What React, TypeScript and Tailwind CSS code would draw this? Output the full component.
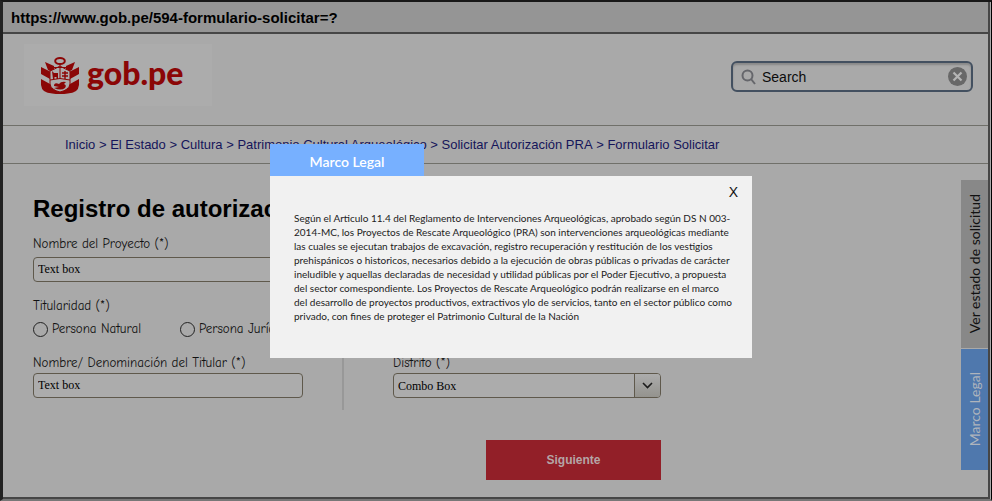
import React from "react";

const crumbs = [
  "Inicio",
  "El Estado",
  "Cultura",
  "Patrimonio Cultural Arqueológico",
  "Solicitar Autorización PRA",
  "Formulario Solicitar",
];

const legalLines = [
  "Según el Articulo 11.4 del Reglamento de Intervenciones Arqueológicas, aprobado según DS N 003-",
  "2014-MC, los Proyectos de Rescate Arqueológico (PRA) son intervenciones arqueológicas mediante",
  "las cuales se ejecutan trabajos de excavación, registro recuperación y restitución de los vestigios",
  "prehispánicos o historicos, necesarios debido a la ejecución de obras públicas o privadas de carácter",
  "ineludible y aquellas declaradas de necesidad y utilidad públicas por el Poder Ejecutivo, a propuesta",
  "del sector comespondiente. Los Proyectos de Rescate Arqueológico podrán realizarse en el marco",
  "del desarrollo de proyectos productivos, extractivos ylo de servicios, tanto en el sector público como",
  "privado, con fines de proteger el Patrimonio Cultural de la Nación",
];

const labelFont = "font-['Comic_Sans_MS','Comic_Neue',Lato,sans-serif] text-[13px] leading-4 text-[#111]";
const fieldFont = "font-['Liberation_Serif',serif] text-xs text-black";

function Shield() {
  return (
    <svg width="38" height="37" viewBox="0 0 38 37" aria-hidden="true">
      <g fill="#8b0606">
        <path d="M4 5 L13 9 V16 L7 13 Z" />
        <path d="M34 5 L25 9 V16 L31 13 Z" />
        <path d="M0 10 L10 15 V36 Q1 36 0 28 Z" />
        <path d="M38 10 L28 15 V36 Q37 36 38 28 Z" />
        <path d="M6 31 H32 V35 Q28 37 19 37 Q10 37 6 35 Z" />
      </g>
      <path d="M0 17 L9 22 V27 L0 22 Z M38 17 L29 22 V27 L38 22 Z" fill="#acacac" />
      <g fill="none" stroke="#8b0606">
        <ellipse cx="19" cy="4" rx="4.8" ry="3" strokeWidth="2" />
        <path d="M9 14 Q14 12 19 9 Q24 12 29 14 V27 Q28 33 19 35 Q10 33 9 27 Z" fill="#acacac" strokeWidth="1" />
        <path d="M12 10.500 H26 M19 7 V22 M9 23 Q19 20 29 23" strokeWidth="1" />
        <path d="M24 22 V14 M21 16 H27 M21 19 H27" strokeWidth="1.4" />
      </g>
      <path d="M11 14 L13 16 H17 V22 H15.500 V20 H13.500 V22 H12 Z" fill="#8b0606" />
      <path d="M13 29 Q13 25 18 27 Q20 24 25 25 L23 27 Q26 28 24 31 Q20 34 13 31 L18 30 Z" fill="#8b0606" />
    </svg>
  );
}

export default function App() {
  return (
    <div className="relative flex min-h-screen flex-col border-y-2 border-l-[3px] border-r border-black border-l-[#222] border-t-[#181818] border-b-[#777] bg-[#a9a9a9] font-['Liberation_Sans',Arial,sans-serif] text-black">
      <div className="mr-px flex flex-1 flex-col border-b-2 border-r-2 border-[#464646]">
        <div className="flex h-8 items-center border-b-2 border-[#464646] bg-[#959595] px-2 pt-[2px] text-[15px] font-bold">
          https://www.gob.pe/594-formulario-solicitar=?
        </div>

        <header className="flex h-[91px] items-start justify-between pl-[21px] pr-[15px] pt-[10px]">
          <div className="flex h-[62px] w-[188px] items-center gap-2 bg-[#acacac] pl-[17px]">
            <Shield />
            <span className="pb-1 font-[Lato,sans-serif] text-[32px] font-black leading-8 text-[#8b0606]">gob.pe</span>
          </div>
          <label className="mt-[17px] flex h-[31px] w-[242px] items-center gap-[6px] rounded-md border-2 border-[#435060] bg-[#a9a9a9] px-2 shadow-[inset_0_2px_2px_#888]">
            <svg width="15" height="16" viewBox="0 0 15 16" fill="none" stroke="#65666b" strokeWidth="2" aria-hidden="true">
              <circle cx="6.5" cy="6.5" r="5" />
              <path d="M10 10 L14 15" />
            </svg>
            <input aria-label="Search" defaultValue="Search" className="min-w-0 flex-1 bg-transparent text-sm text-[#0c0c0c] outline-none" />
            <button type="button" aria-label="Borrar" className="-mr-1">
              <svg width="19" height="19" viewBox="0 0 19 19" className="block">
                <circle cx="9.5" cy="9.5" r="9.5" fill="#686868" />
                <path d="M5.5 5.5 L13.5 13.5 M13.5 5.5 L5.5 13.5" stroke="#b5b5b5" strokeWidth="2.2" />
              </svg>
            </button>
          </label>
        </header>

        <nav aria-label="Ruta" className="flex h-[39px] items-center whitespace-pre border-y border-[#70706a] pl-[62px] pt-px text-[13px] text-[#15155a]">
          {crumbs.map((c, i) => (
            <React.Fragment key={c}>
              {i > 0 && <span>{" > "}</span>}
              <a href="#">{c}</a>
            </React.Fragment>
          ))}
        </nav>

        <div className="flex flex-1 justify-between">
          <form className="w-[658px] pl-[30px] pt-[29px]">
            <h1 className="whitespace-nowrap text-2xl font-bold">Registro de autorización</h1>
            <div className="mt-[11px] w-[270px]">
              <label htmlFor="proyecto" className={"block " + labelFont}>Nombre del Proyecto (*)</label>
              <input id="proyecto" defaultValue="Text box" className={"mt-[5px] block h-[25px] w-full rounded border border-[#5f594c] bg-[#acacac] px-1 " + fieldFont} />
            </div>
            <fieldset className="mt-4 flex flex-wrap gap-x-[39px]">
              <legend className={"mb-[7px] " + labelFont}>Titularidad (*)</legend>
              {["Persona Natural", "Persona Jurídica"].map((p) => (
                <label key={p} className={"flex items-center gap-1 " + labelFont}>
                  <input type="radio" name="titularidad" className="size-[15px] appearance-none rounded-full border border-[#222]" />
                  {p}
                </label>
              ))}
            </fieldset>
            <div className="mt-[18px] flex items-end">
              <div className="w-[270px]">
                <label htmlFor="titular" className={"block " + labelFont}>Nombre/ Denominación del Titular (*)</label>
                <input id="titular" defaultValue="Text box" className={"mt-[2px] block h-[25px] w-full rounded border border-[#5f594c] bg-[#acacac] px-1 " + fieldFont} />
              </div>
              <div className="-mb-3 -mt-10 ml-[39px] h-20 w-[2px] bg-[#989898]" />
              <div className="ml-[49px] w-[268px]">
                <label htmlFor="distrito" className={"block " + labelFont}>Distrito (*)</label>
                <div className="mt-[2px] grid grid-cols-[1fr_26px] overflow-hidden rounded border border-[#5f594c] bg-[#acacac]">
                  <select id="distrito" className={"col-span-2 col-start-1 row-start-1 h-[23px] w-full appearance-none px-1 " + fieldFont}>
                    <option>Combo Box</option>
                  </select>
                  <span className="pointer-events-none col-start-2 row-start-1 flex items-center justify-center border-l border-[#5f594c] bg-gradient-to-b from-[#acacac] to-[#94938e]">
                    <svg width="11" height="7" viewBox="0 0 11 7" fill="none" stroke="#1c1c1c" strokeWidth="1.6" aria-hidden="true">
                      <path d="M1 1 L5.5 5.5 L10 1" />
                    </svg>
                  </span>
                </div>
              </div>
            </div>
            <button type="button" className="ml-auto mt-[42px] block h-10 w-[175px] bg-[#921f28] text-xs font-bold text-[#b5a5a6]">
              Siguiente
            </button>
          </form>

          <aside className="mt-4 flex w-[27px] flex-col gap-px font-[Lato,sans-serif]">
            <button type="button" className="flex h-[168px] items-center justify-center bg-[#888] text-sm text-[#111]">
              <span className="rotate-180 whitespace-nowrap [writing-mode:vertical-rl]">Ver estado de solicitud</span>
            </button>
            <button type="button" className="flex h-[121px] items-center justify-center bg-[#4f78ad] text-sm text-[#aeb4bc]">
              <span className="rotate-180 whitespace-nowrap [writing-mode:vertical-rl]">Marco Legal</span>
            </button>
          </aside>
        </div>
      </div>

      <section role="dialog" aria-labelledby="marco" className="absolute left-[267px] top-[142px] w-[482px] font-[Lato,sans-serif]">
        <h2 id="marco" className="flex h-8 w-[154px] items-center justify-center bg-[#77b0ff] pt-1 text-sm font-semibold text-white">Marco Legal</h2>
        <div className="bg-[#f1f1f1] px-6 pb-[35px]">
          <div className="-mr-[10px] flex justify-end pt-[6px]">
            <button type="button" aria-label="X" className="font-['Liberation_Sans',sans-serif] text-sm leading-5 text-[#111]">X</button>
          </div>
          <p className="mt-[9px] whitespace-nowrap text-[10px] leading-[14px] text-[#222]">
            {legalLines.map((l) => (
              <span key={l} className="block">{l}</span>
            ))}
          </p>
        </div>
      </section>
    </div>
  );
}
